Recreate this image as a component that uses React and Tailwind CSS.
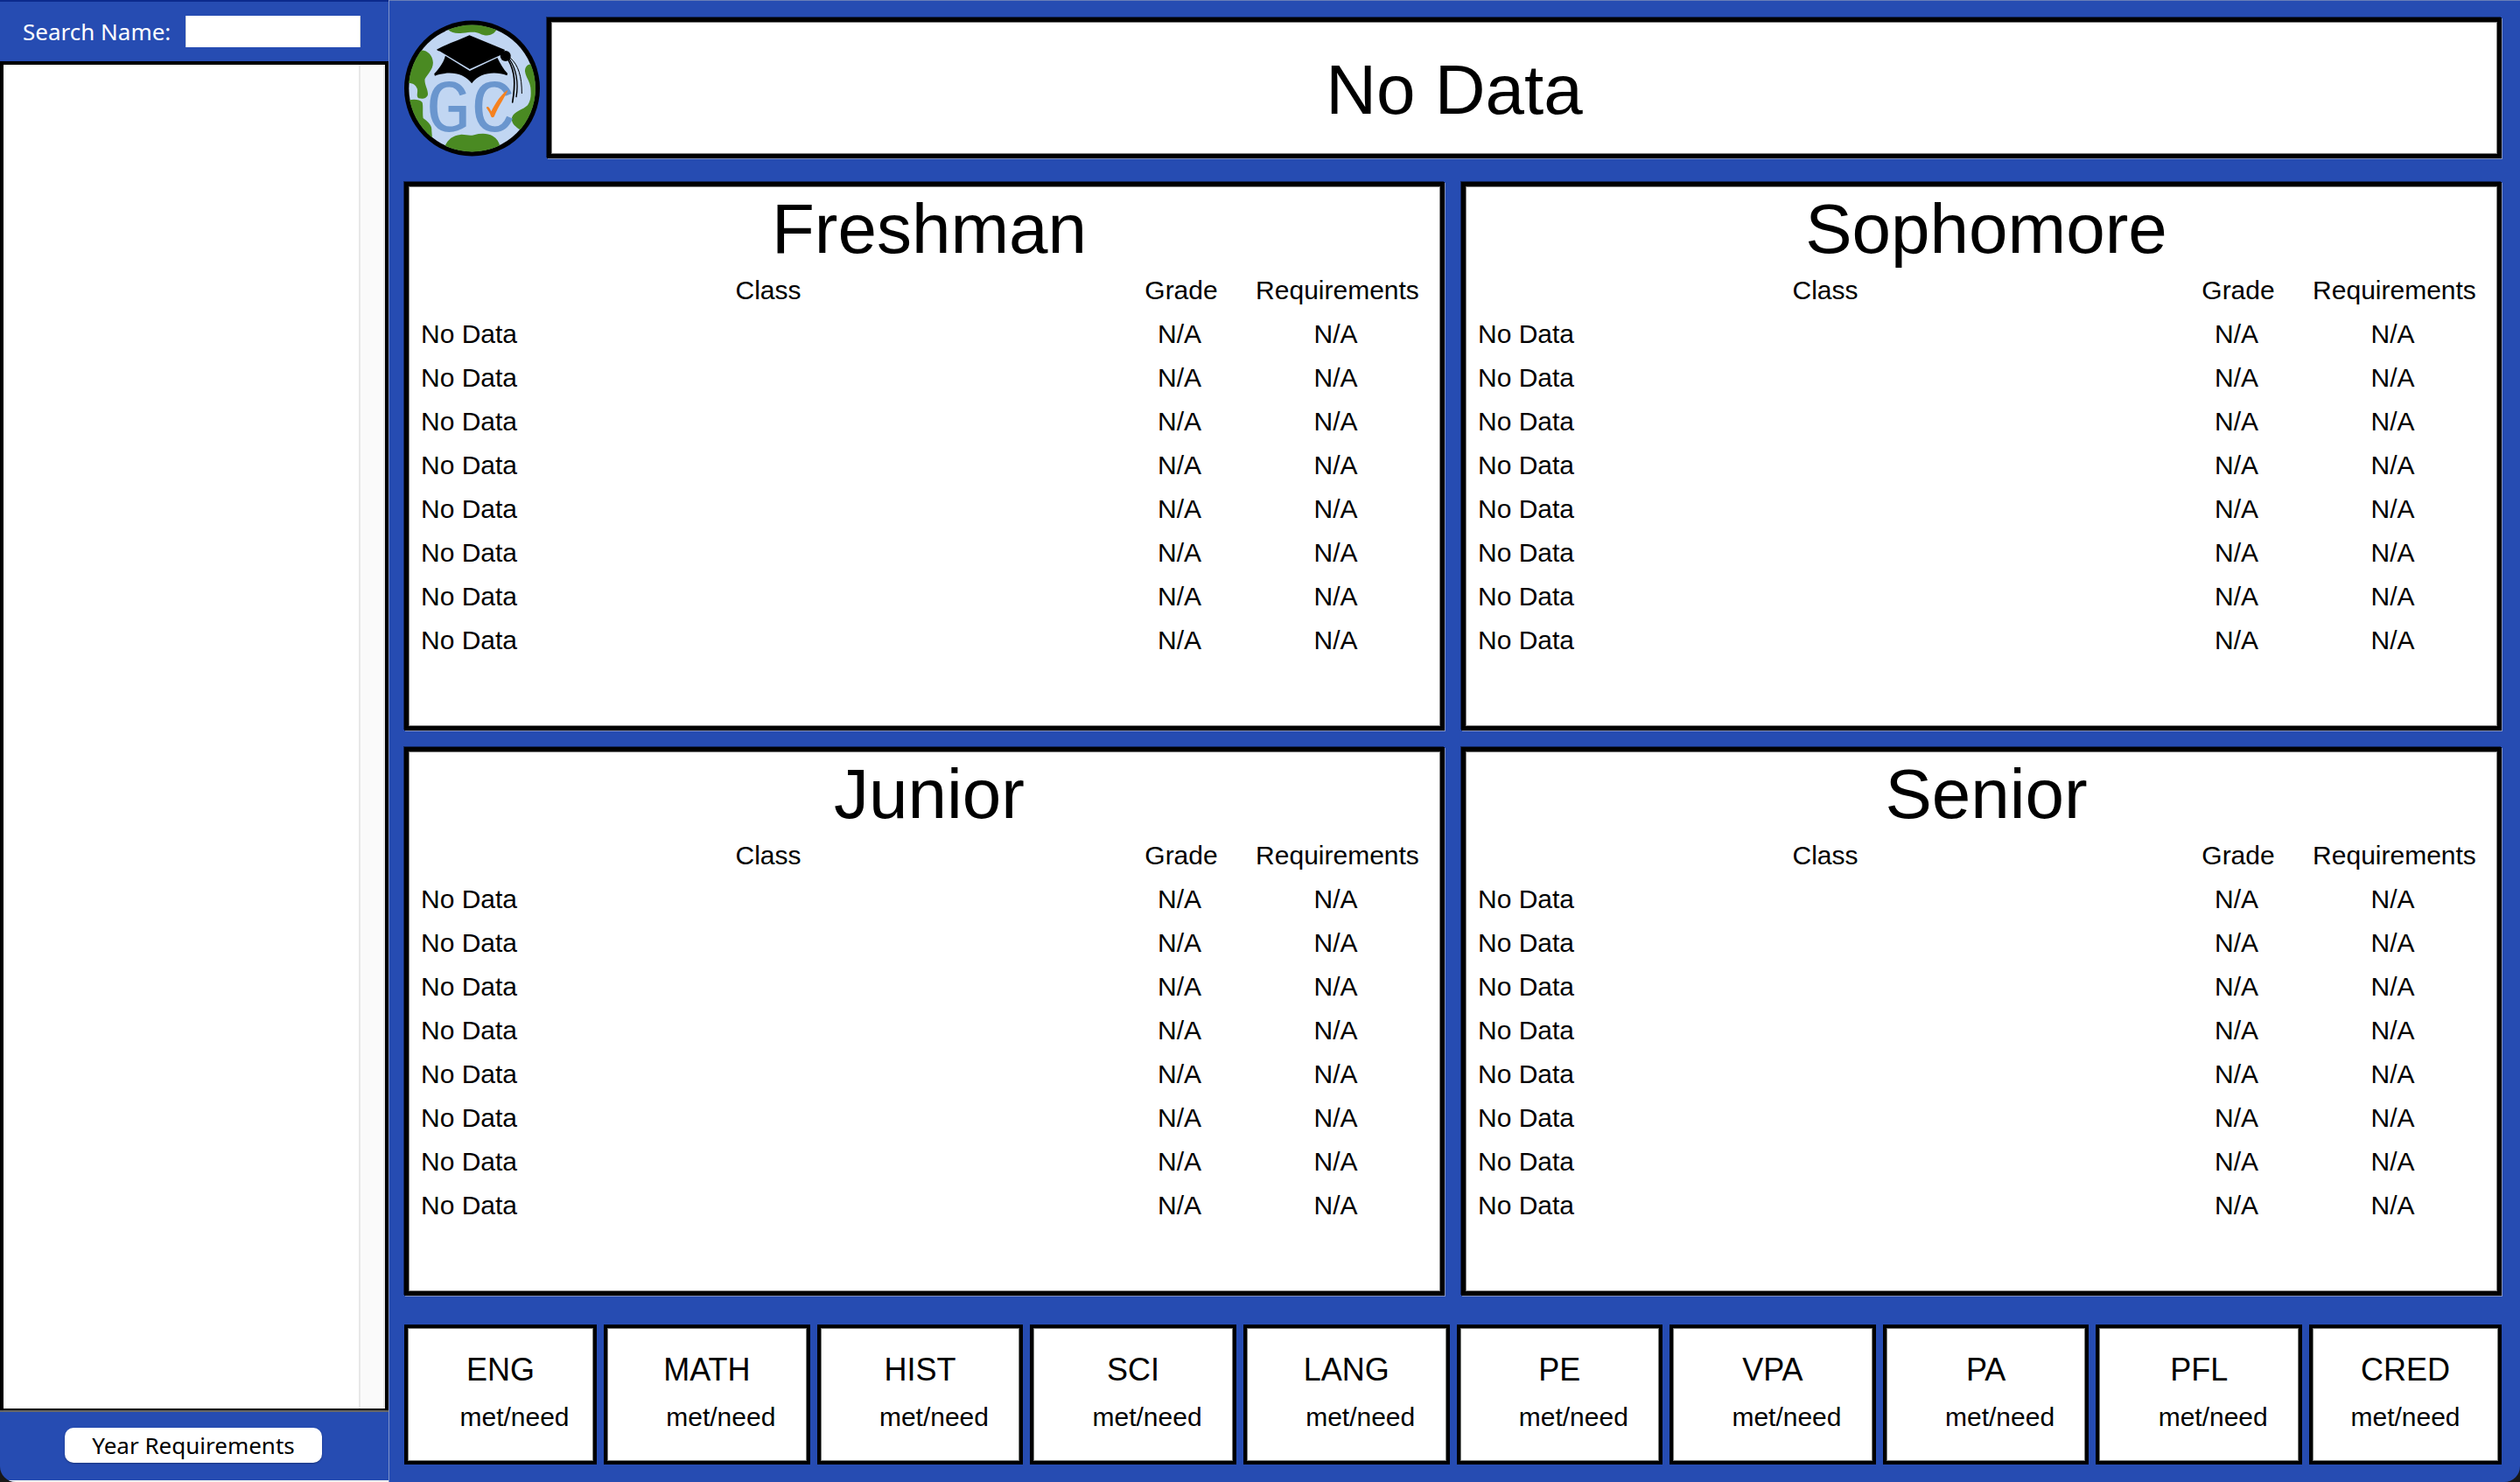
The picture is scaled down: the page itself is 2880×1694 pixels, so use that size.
import React from "react";

const YEARS = ["Freshman", "Sophomore", "Junior", "Senior"];
const ROWS = Array.from({ length: 8 }, () => ({
  name: "No Data",
  grade: "N/A",
  requirement: "N/A",
}));
const SUBJECTS = ["ENG", "MATH", "HIST", "SCI", "LANG", "PE", "VPA", "PA", "PFL", "CRED"];

const BOX =
  "border-[5px] border-black bg-white shadow-[inset_0_0_0_1px_#808080,1px_1px_0_0_#8593bf,-1px_-1px_0_0_#13265a]";

function Logo() {
  return (
    <svg viewBox="62 66 466 468" className="h-[156px] w-[155px] shrink-0" role="img" aria-label="Graduation check logo">
      <defs>
        <clipPath id="globe">
          <circle cx="295" cy="300" r="218" />
        </clipPath>
      </defs>
      <circle cx="295" cy="300" r="233" fill="#000" />
      <circle cx="295" cy="300" r="217" fill="#c1d6f2" />
      <g clipPath="url(#globe)" fill="#4a8a22">
        <path d="M212 98 C225 110 240 112 262 110 C290 106 308 104 322 112 C345 123 366 120 380 98 L370 70 H220 Z" />
        <path d="M115 170 C140 166 160 186 161 212 C160 238 142 250 133 268 C130 285 145 305 143 322 C139 336 125 337 111 334 C101 325 111 312 106 300 C99 286 88 280 76 283 L60 280 L70 200 Z" />
        <path d="M70 342 C90 336 115 336 124 348 C128 362 124 385 127 402 C140 412 158 425 156 444 L158 470 L100 450 Z" />
        <path d="M202 498 C212 475 230 461 255 459 C275 458 285 465 302 460 C325 454 350 454 366 464 C380 472 388 484 391 500 L370 530 H220 Z" />
        <path d="M502 216 C485 216 476 228 477 242 C480 262 494 276 496 298 C498 320 498 340 486 358 C470 374 440 378 432 400 C428 420 445 432 460 442 L530 400 V230 Z" />
      </g>
      <text x="136" y="447" fill="#6a96ce" fontFamily="'Liberation Mono', monospace" fontSize="258">
        GC
      </text>
      <path d="M174 166 C212 146 250 133 286 117 L408 168 L396 184 L287 234 L184 172 C178 171 174 169 174 166 Z" fill="#000" />
      <path d="M203 188 L287 240 L382 195 C392 215 403 235 417 249 L415 256 C375 240 320 246 294 283 C265 245 215 240 167 257 L165 250 C183 230 197 212 203 188 Z" fill="#000" />
      <circle cx="410" cy="189" r="18" fill="#000" />
      <g fill="none" stroke="#000" strokeLinecap="round">
        <path d="M419 201 C444 245 444 285 434 348" strokeWidth="5" />
        <path d="M424 200 C450 240 454 285 447 329" strokeWidth="4" />
        <path d="M426 195 C455 220 466 260 466 317" strokeWidth="3" />
      </g>
      <path d="M344 366 C348 360 354 364 361 379 C375 350 395 320 418 305 C412 325 385 360 371 397 C367 401 363 401 360 396 C357 385 350 376 344 366 Z" fill="#f58220" />
    </svg>
  );
}

function Sidebar() {
  return (
    <aside className="flex w-[445px] shrink-0 flex-col border-r border-[#8093c9] font-['Noto_Sans','Open_Sans',sans-serif] text-[26px]">
      <div className="flex h-[70px] items-center border-t-2 border-[#0c2a8c] pl-[26px]">
        <label htmlFor="search" className="w-[186px] leading-9 text-white">
          Search Name:
        </label>
        <input id="search" type="text" className="h-9 w-[200px] border-x border-[#dcdcdc] bg-white px-2 text-black outline-none" />
      </div>
      <div className="flex flex-1 justify-end border-4 border-b-2 border-black bg-white">
        <div className="w-[30px] border-r-2 border-l-2 border-[#e8e8e8] bg-[#fafafa]" />
      </div>
      <div className="flex h-[82px] items-center justify-center border-t-2 border-b-2 border-t-[#666666] border-b-[#f0f0f0] pr-0.5 pb-0.5">
        <button type="button" className="h-10 w-[294px] rounded-[10px] bg-white leading-[38px] text-black shadow-[0_1px_2px_rgba(0,0,0,0.3)]">
          Year Requirements
        </button>
      </div>
    </aside>
  );
}

function YearPanel({ title }) {
  return (
    <section className={`${BOX} px-[14px] pt-1`}>
      <h2 className="pl-[11px] text-center text-[80px] leading-[90px]">{title}</h2>
      <table aria-label={title} className="w-full table-fixed border-collapse text-[30px] leading-[50px]">
        <colgroup>
          <col />
          <col className="w-[150px]" />
          <col className="w-[207px]" />
        </colgroup>
        <thead>
          <tr>
            <th className="p-0 font-normal">Class</th>
            <th className="p-0 font-normal">Grade</th>
            <th className="p-0 font-normal">Requirements</th>
          </tr>
        </thead>
        <tbody>
          {ROWS.map((row, i) => (
            <tr key={i}>
              <td className="p-0">{row.name}</td>
              <td className="p-0 pr-1 text-center">{row.grade}</td>
              <td className="p-0 pr-1 text-center">{row.requirement}</td>
            </tr>
          ))}
        </tbody>
      </table>
    </section>
  );
}

function SubjectCard({ name }) {
  return (
    <div className="flex h-40 flex-col items-center border-4 border-black bg-white pt-[22px] shadow-[inset_0_0_0_1px_#7a7d7a]">
      <div className="text-[36px] leading-[52px]">{name}</div>
      <div className={`text-[30px] leading-[56px] ${name === "CRED" ? "" : "pl-8"}`}>met/need</div>
    </div>
  );
}

export default function App() {
  return (
    <div className="min-h-screen bg-[#181818]">
      <div className="flex min-h-screen overflow-hidden rounded-b-[18px] bg-[#264cb2] text-black">
        <Sidebar />
        <main className="flex min-w-0 flex-1 flex-col border-t border-[#6a7fb8] pt-[19px] pr-[21px] pb-5 pl-[17px] font-['Liberation_Sans',Arial,sans-serif]">
          <header className="flex items-center gap-2">
            <Logo />
            <div className={`${BOX} flex h-[161px] flex-1 items-center justify-center pt-1 pr-40`}>
              <h1 className="text-[80px] leading-[90px]">No Data</h1>
            </div>
          </header>
          <div className="mt-[27px] grid flex-1 grid-cols-2 gap-[19px]">
            {YEARS.map((year) => (
              <YearPanel key={year} title={year} />
            ))}
          </div>
          <div className="mt-[33px] grid grid-cols-[220px_repeat(8,minmax(0,1fr))_220px] gap-2">
            {SUBJECTS.map((name) => (
              <SubjectCard key={name} name={name} />
            ))}
          </div>
        </main>
      </div>
    </div>
  );
}
